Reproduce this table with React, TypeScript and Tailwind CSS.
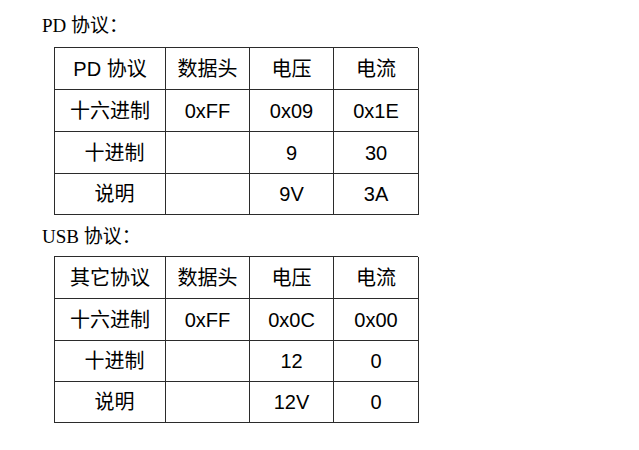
const rows1 = [
  { cells: ['PD 协议', '数据头', '电压', '电流'], h: 'h-[42px]' },
  { cells: ['十六进制', '0xFF', '0x09', '0x1E'], h: 'h-[42px]' },
  { cells: ['十进制', '', '9', '30'], h: 'h-[42px]', indent: true },
  { cells: ['说明', '', '9V', '3A'], h: 'h-[41px]', indent: true },
];

const rows2 = [
  { cells: ['其它协议', '数据头', '电压', '电流'], h: 'h-[42px]' },
  { cells: ['十六进制', '0xFF', '0x0C', '0x00'], h: 'h-[42px]' },
  { cells: ['十进制', '', '12', '0'], h: 'h-[41px]', indent: true },
  { cells: ['说明', '', '12V', '0'], h: 'h-[41px]', indent: true },
];

type Row = { cells: string[]; h: string; indent?: boolean };

function ProtocolTable({ rows }: { rows: Row[] }) {
  return (
    <div className="ml-[54px] w-[364px] grid grid-cols-[111px_84px_84px_85px] border-l border-t border-[#2b2b2b] text-[20px] text-black font-['Liberation_Sans','Noto_Sans_CJK_SC',sans-serif]">
      {rows.map((row, r) =>
        row.cells.map((c, i) => (
          <div
            key={`${r}-${i}`}
            className={`${row.h} flex items-center justify-center border-r border-b border-[#2b2b2b] ${
              i === 0 && row.indent ? 'pl-[9px]' : ''
            }`}
          >
            {c}
          </div>
        ))
      )}
    </div>
  );
}

export default function App() {
  return (
    <div className="w-[639px] h-[450px] bg-white pt-[14px]">
      <div className="ml-[42px] h-[24px] leading-[24px] text-[19px] text-black font-['Liberation_Serif','Noto_Sans_CJK_SC',serif] mb-[9px]">
        PD 协议：
      </div>
      <ProtocolTable rows={rows1} />
      <div className="ml-[42px] mt-[10px] h-[24px] leading-[24px] text-[19px] text-black font-['Liberation_Serif','Noto_Sans_CJK_SC',serif] mb-[7px]">
        USB 协议：
      </div>
      <ProtocolTable rows={rows2} />
    </div>
  );
}
